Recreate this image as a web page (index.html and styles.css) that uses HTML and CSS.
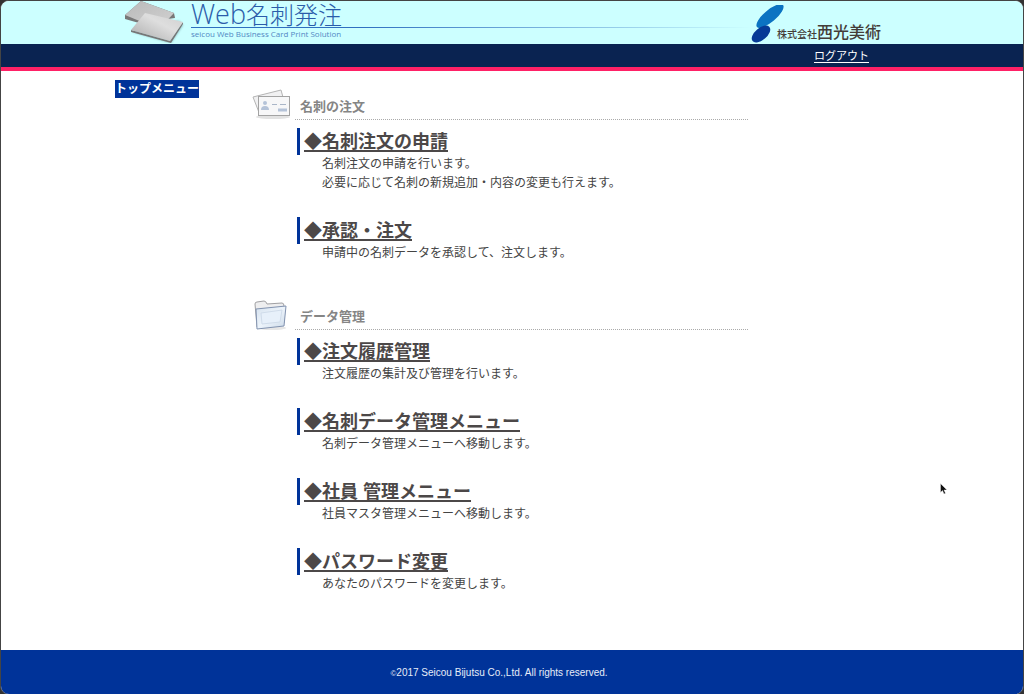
FILE: index.html
```html
<!DOCTYPE html>
<html lang="ja">
<head>
<meta charset="utf-8">
<meta name="viewport" content="width=device-width, initial-scale=1">
<title>Web名刺発注</title>
<link rel="stylesheet" href="styles.css">
</head>
<body>
<div class="page">
  <header class="header">
    <div class="band">
      <div class="container banner">
        <svg class="cards-logo" viewBox="0 0 60 42" aria-hidden="true">
          <defs>
            <linearGradient id="cardBack" x1="0" y1="0" x2="1" y2="1"><stop offset="0" stop-color="#b9b9b9"/><stop offset="1" stop-color="#d2d2d2"/></linearGradient>
            <linearGradient id="cardFront" x1="0" y1="1" x2="1" y2="0"><stop offset="0" stop-color="#a9a9a9"/><stop offset="0.6" stop-color="#dedede"/><stop offset="1" stop-color="#cfcfcf"/></linearGradient>
            <filter id="soft"><feGaussianBlur stdDeviation="1"/></filter>
          </defs>
          <path d="M8 31 46 42 58 24 54 20 12 24Z" fill="#527c80" opacity=".55" filter="url(#soft)"/>
          <path d="M0 14 16 0 49 12 50 17 14 22 0 18Z" fill="#777"/>
          <path d="M0 14 16 0 49 12 34 28Z" fill="url(#cardBack)"/>
          <path d="M6 29 45 40 58 21 58 23 46 42 6 31Z" fill="#777"/>
          <path d="M6 29 20 12 58 21 45 40Z" fill="url(#cardFront)"/>
        </svg>
        <div class="brand">
          <h1 class="brand-name"><span class="brand-latin">Web</span>名刺発注</h1>
          <div class="brand-rule"></div>
          <p class="brand-sub">seicou Web Business Card Print Solution</p>
        </div>
        <div class="company">
          <svg class="company-mark" viewBox="0 0 34 38" aria-hidden="true">
            <ellipse cx="19" cy="11" rx="17" ry="6" transform="rotate(-40 19 11)" fill="#0b73c2"/>
            <ellipse cx="10" cy="29" rx="11" ry="6" transform="rotate(-40 10 29)" fill="#063a96"/>
          </svg>
          <p class="company-name"><span class="company-type">株式会社</span><span>西光美術</span></p>
        </div>
      </div>
    </div>
    <nav class="band topbar">
      <div class="container topbar-inner"><a class="logout" href="#">ログアウト</a></div>
    </nav>
  </header>

  <div class="band body">
    <div class="container content">
      <aside class="side"><h2 class="side-title">トップメニュー</h2></aside>
      <main class="main">
        <section class="section">
          <div class="section-head">
            <svg class="section-icon" viewBox="0 1 42 31" aria-hidden="true">
              <ellipse cx="21" cy="29" rx="17" ry="2" fill="#e2e2e2"/>
              <path d="M1 9 29 2 34 20 8 27Z" fill="#f1f1f2" stroke="#b4b4b4"/>
              <rect x="6.500" y="8.500" width="31" height="19" fill="#f7f7f8" stroke="#a3a3a3"/>
              <circle cx="13" cy="15" r="2" fill="#b5c3d8"/>
              <path d="M9 22q0-4 4-4t4 4Z" fill="#b5c3d8"/>
              <path d="M20 16.500h5M28 16.500h6" stroke="#aab6c8"/>
              <path d="M26 22h9" stroke="#b5c3d8" stroke-width="3"/>
            </svg>
            <h2 class="section-title">名刺の注文</h2>
          </div>
          <ul class="menu">
            <li class="item"><h3 class="item-title"><a href="#">◆名刺注文の申請</a></h3><p class="item-text">名刺注文の申請を行います。<br>必要に応じて名刺の新規追加・内容の変更も行えます。</p></li>
            <li class="item"><h3 class="item-title"><a href="#">◆承認・注文</a></h3><p class="item-text">申請中の名刺データを承認して、注文します。</p></li>
          </ul>
        </section>
        <section class="section">
          <div class="section-head">
            <svg class="section-icon" viewBox="0 1 42 31" aria-hidden="true">
              <defs><linearGradient id="folder" x1="0" y1="0" x2="1" y2="1"><stop offset="0" stop-color="#d5e1ee"/><stop offset="0.5" stop-color="#edf4fb"/><stop offset="1" stop-color="#cbd9e8"/></linearGradient></defs>
              <ellipse cx="20" cy="30" rx="14" ry="2" fill="#e6e6e6"/>
              <path d="M5 29 3 6Q3 4 5 4L12 3Q14 3 15 6L30 5Q32 5 32 8L32 25Z" fill="#eeeeef" stroke="#a0a0a3"/>
              <path d="M4 11 34 8 32 28 5 31Z" fill="url(#folder)" stroke="#8293b0"/>
              <path d="M9 15 30 12 28 24 10 26Z" fill="#e7f0fa" stroke="#d0dcea"/>
            </svg>
            <h2 class="section-title">データ管理</h2>
          </div>
          <ul class="menu">
            <li class="item"><h3 class="item-title"><a href="#">◆注文履歴管理</a></h3><p class="item-text">注文履歴の集計及び管理を行います。</p></li>
            <li class="item"><h3 class="item-title"><a href="#">◆名刺データ管理メニュー</a></h3><p class="item-text">名刺データ管理メニューへ移動します。</p></li>
            <li class="item"><h3 class="item-title"><a href="#">◆社員 管理メニュー</a></h3><p class="item-text">社員マスタ管理メニューへ移動します。</p></li>
            <li class="item"><h3 class="item-title"><a href="#">◆パスワード変更</a></h3><p class="item-text">あなたのパスワードを変更します。</p></li>
          </ul>
        </section>
      </main>
    </div>
  </div>

  <footer class="band footer"><p class="container copyright"><span class="copy-sign">©</span>2017 Seicou Bijutsu Co.,Ltd. All rights reserved.</p></footer>
  <svg class="pointer" viewBox="0 0 8 12" aria-hidden="true"><path d="M.5.5v9l2-2 1.500 3.500 1.500-.7L4 7h3Z" fill="#111" stroke="#fff" stroke-width=".4"/></svg>
</div>
</body>
</html>
```
FILE: styles.css
```css
* { box-sizing: border-box; }

body {
  margin: 0;
  background: #333;
  color: #444;
  font-family: "Liberation Sans", "Noto Sans CJK JP", sans-serif;
  font-size: 12px;
  line-height: 19px;
}

h1, h2, h3, p, ul { margin: 0; padding: 0; }

.page {
  position: relative;
  display: flex;
  flex-direction: column;
  min-height: 100vh;
  border: 1px solid #444;
  border-radius: 9px;
  overflow: hidden;
  background: #fff;
}

.band { padding-right: 26px; }

.container {
  width: 100%;
  max-width: 768px;
  margin: 0 auto;
}

/* Banner */
.header { background: #cff; }

.banner {
  display: flex;
  align-items: flex-start;
  height: 43px;
  padding: 0 2px 0 10px;
}

.cards-logo { flex: none; width: 60px; height: 42px; }

.brand { flex: 1; padding-left: 6px; }

.brand-name {
  color: #2a5caa;
  font-family: "Noto Sans CJK JP", sans-serif;
  font-size: 24px;
  font-weight: 300;
  line-height: 26px;
}

.brand-latin { font-family: "Open Sans", sans-serif; font-size: 27px; }

.brand-rule { height: 1px; background: linear-gradient(90deg, #2f6fc0 30%, #cff); }

.brand-sub {
  color: #5288c4;
  font-family: "Open Sans", sans-serif;
  font-size: 8px;
  line-height: 12px;
}

.company { display: flex; align-items: flex-end; height: 42px; }

.company-mark { width: 34px; height: 38px; margin-right: -8px; }

.company-name {
  display: flex;
  align-items: baseline;
  color: #443c38;
  font-family: "Noto Sans CJK JP", sans-serif;
  font-size: 16px;
  font-weight: 500;
  line-height: 18px;
}

.company-type { font-size: 10px; }

.topbar {
  background: #0a2351;
  border-bottom: 4px solid #ff2166;
}

.topbar-inner { padding: 2px 14px 0 0; line-height: 21px; text-align: right; }

.logout { color: #fff; font-size: 11px; text-underline-offset: 2px; }

/* Content */
.body { flex: 1; padding-bottom: 56px; }

.content { display: flex; }

.side { width: 137px; padding-top: 9px; }

.side-title {
  display: inline-block;
  background: #039;
  color: #fff;
  font-size: 12px;
  line-height: 18px;
}

.main { width: 496px; padding-top: 18px; }

.section + .section { margin-top: 36px; }

.section-head { display: flex; }

.section-icon { width: 42px; height: 31px; }

.section-title {
  flex: 1;
  align-self: flex-end;
  margin-left: 1px;
  padding: 0 0 3px 5px;
  border-bottom: 1px dotted #aaa;
  color: #858585;
  font-size: 13px;
  font-weight: 700;
}

.menu {
  display: flex;
  flex-direction: column;
  gap: 24px;
  padding: 8px 0 0 45px;
  list-style: none;
}

.item-title {
  padding: 1px 0 0 4px;
  border-left: 3px solid #039;
  font-size: 18px;
  line-height: 26px;
}

.item-title a {
  color: #4c4848;
  text-decoration-thickness: 2px;
  text-underline-offset: 2px;
}

.item-text { padding-left: 25px; }

/* Footer */
.footer { padding-top: 13px; padding-bottom: 11px; background: #039; }

.copyright { color: #e6ecf8; font-size: 10px; text-align: center; }

.copy-sign { font-size: 8px; }

.pointer {
  position: absolute;
  top: 482px;
  left: 939px;
  width: 8px;
  height: 12px;
}
```
